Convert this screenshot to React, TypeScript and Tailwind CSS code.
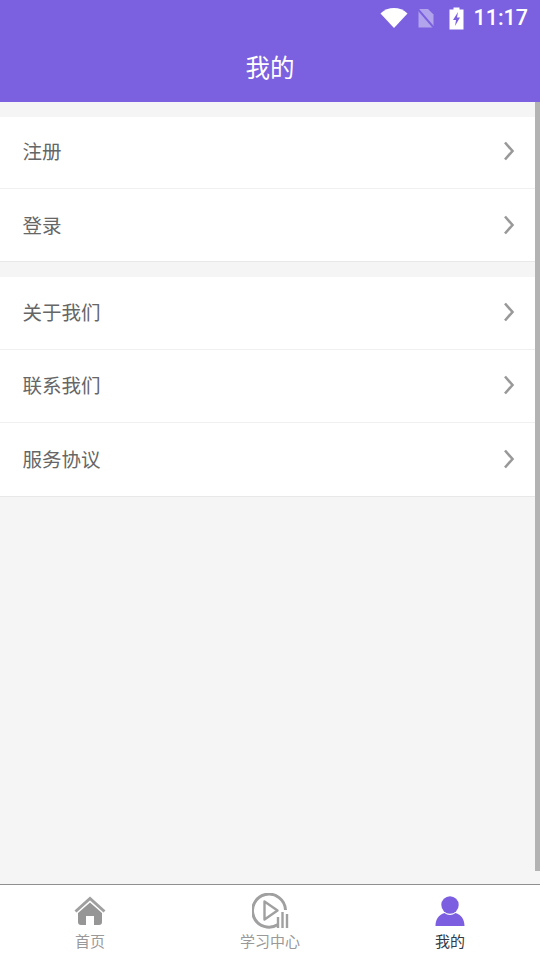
const font = { fontFamily: '"Noto Sans CJK SC", "Noto Sans", sans-serif' };

function Chevron() {
  return (
    <svg width="14" height="22" viewBox="0 0 14 22" fill="none" className="shrink-0">
      <path d="M3 2.5 L10.5 11 L3 19.5" stroke="#999999" strokeWidth="2.6" />
    </svg>
  );
}

function Row({ label, h, shift, last }: { label: string; h: string; shift: string; last?: boolean }) {
  return (
    <div className={`flex items-center justify-between pl-[22.5px] pr-[24px] bg-white ${h} ${last ? "border-b border-[#e8e8e8]" : "border-b border-[#f0f0f0]"}`}>
      <span className={`text-[19.5px] leading-none text-[#666666] ${shift}`}>{label}</span>
      <span className={`flex ${shift}`}>
        <Chevron />
      </span>
    </div>
  );
}

function Tab({ label, color, icon }: { label: string; color: string; icon: React.ReactNode }) {
  return (
    <div className="flex-1 flex flex-col items-center pt-[8px]">
      <div className="h-[36px] flex items-center justify-center">{icon}</div>
      <span className={`text-[15px] leading-[20px] mt-[2px] ${color}`}>{label}</span>
    </div>
  );
}

export default function App() {
  return (
    <div className="relative w-[540px] h-[960px] flex flex-col bg-[#f5f5f5] overflow-hidden" style={font}>
      <div className="bg-[#7b61e0] h-[102px] shrink-0 flex flex-col">
        <div className="h-[36px] flex items-center justify-end pr-[12px] text-white">
          <svg width="28" height="22" viewBox="0 0 28 22" className="mr-[8px]">
            <path d="M0.5 6.5 C8 -0.8 20 -0.8 27.5 6.5 L14 21 Z" fill="#ffffff" />
          </svg>
          <svg width="20" height="22" viewBox="0 0 20 22" className="mr-[13px]">
            <path d="M2.5 2 H12 L17.5 7.5 V20.5 H2.5 Z" fill="#ffffff" fillOpacity="0.42" />
            <path d="M0.5 0.5 L18.5 21.5" stroke="#7b61e0" strokeWidth="2" />
          </svg>
          <svg width="15" height="23" viewBox="0 0 15 23" className="mr-[9px]">
            <path d="M4.5 0.5 H10.5 V2.5 H14.5 V22.5 H0.5 V2.5 H4.5 Z" fill="#ffffff" />
            <path d="M9 5 L4 13 H7 L6 19 L11 10.5 H8 Z" fill="#7b61e0" />
          </svg>
          <span className="text-[21.5px] leading-none font-medium" style={{ fontFamily: "Roboto, sans-serif" }}>11:17</span>
        </div>
        <div className="flex-1 flex items-center justify-center pb-[3px]">
          <span className="text-[24.5px] leading-none text-white">我的</span>
        </div>
      </div>

      <div className="flex-1 pt-[15px]">
        <div>
          <Row label="注册" h="h-[72px]" shift="-translate-y-[2px]" />
          <Row label="登录" h="h-[73px]" shift="translate-y-0" last />
        </div>
        <div className="mt-[15px]">
          <Row label="关于我们" h="h-[73px]" shift="-translate-y-[1px]" />
          <Row label="联系我们" h="h-[73px]" shift="-translate-y-[1px]" />
          <Row label="服务协议" h="h-[74px]" shift="-translate-y-[1px]" last />
        </div>
      </div>

      <div className="h-[76px] shrink-0 bg-white border-t border-[#8f8f8f] flex">
        <Tab
          label="首页"
          color="text-[#999999]"
          icon={
            <svg width="32" height="30" viewBox="0 0 32 30">
              <path d="M1.5 15.5 L16 2.5 L30.5 15.5" fill="none" stroke="#a0a0a0" strokeWidth="3" />
              <path d="M16 6.5 L28 17 V26 Q28 29 25 29 H20 V20 H12 V29 H7 Q4 29 4 26 V17 Z" fill="#969696" />
            </svg>
          }
        />
        <Tab
          label="学习中心"
          color="text-[#999999]"
          icon={
            <svg width="38" height="36" viewBox="0 0 38 36" fill="none" className="translate-x-[1px]">
              <path d="M26 31.5 A16.5 16.5 0 1 1 33.5 17" stroke="#a0a0a0" strokeWidth="3" />
              <path d="M12.5 8.5 L25.5 17.5 L12.5 26.5 Z" stroke="#a0a0a0" strokeWidth="2.4" strokeLinejoin="round" />
              <path d="M26 24 V35 M30.5 19 V35 M35 21 V35" stroke="#a0a0a0" strokeWidth="2.4" />
            </svg>
          }
        />
        <Tab
          label="我的"
          color="text-[#333a45]"
          icon={
            <svg width="30" height="31" viewBox="0 0 30 31">
              <circle cx="15" cy="9" r="8.7" fill="#7b5fe0" />
              <path d="M0.5 30 C0.5 23 4 18.5 9.5 17 C12.5 19.6 17.5 19.6 20.5 17 C26 18.5 29.5 23 29.5 30 Z" fill="#7b5fe0" />
            </svg>
          }
        />
      </div>

      <div className="absolute right-0 top-[102px] w-[5px] h-[769px] bg-[#b3b3b3]" />
    </div>
  );
}
